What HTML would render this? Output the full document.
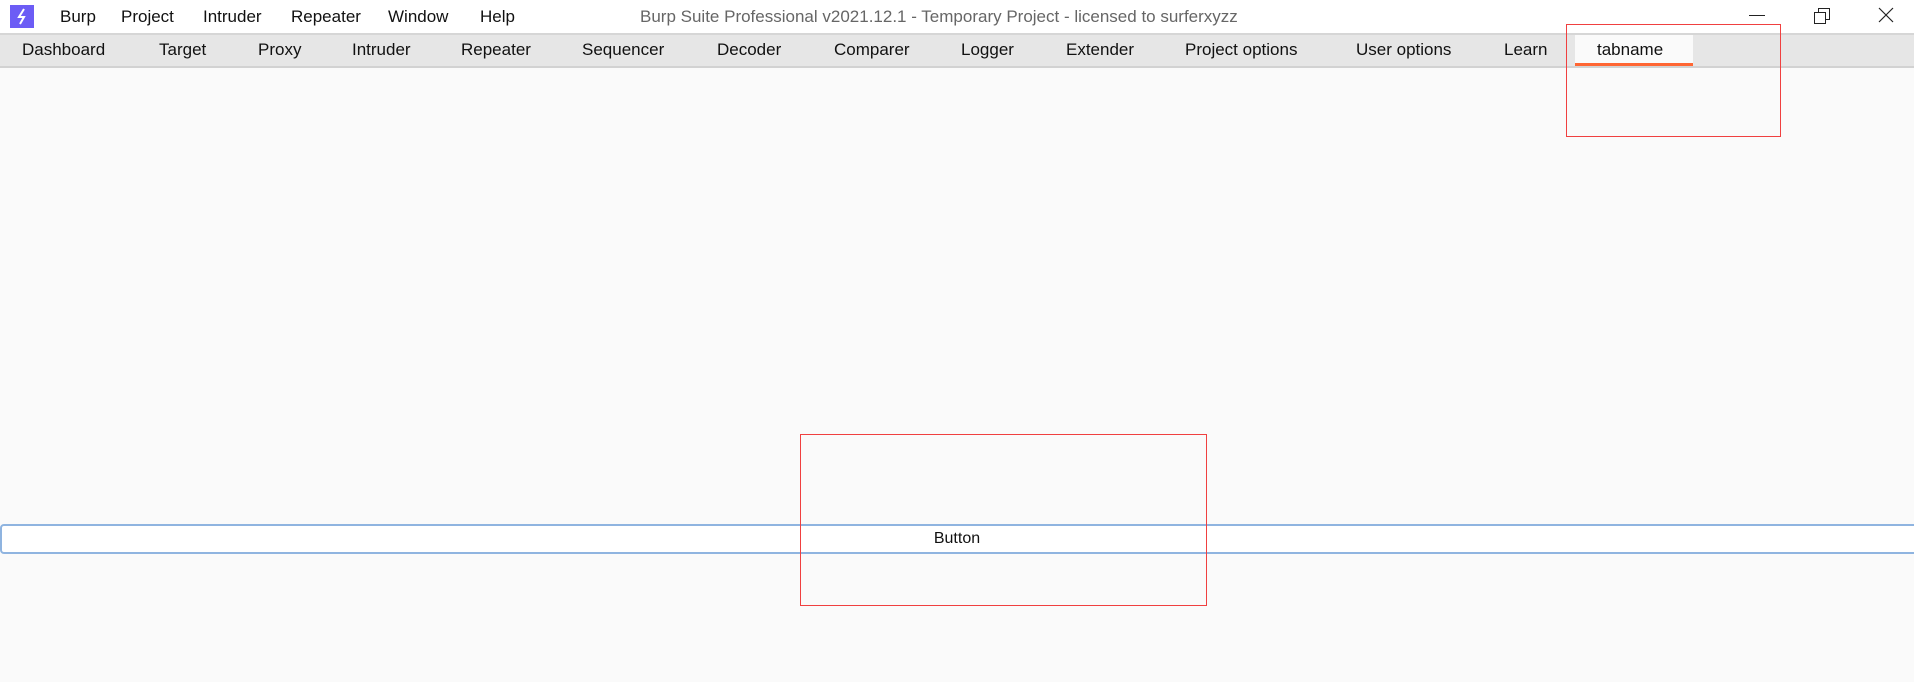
<!DOCTYPE html>
<html><head><meta charset="utf-8"><style>
*{margin:0;padding:0;box-sizing:border-box}
body{width:1914px;height:682px;background:#fafafa;font-family:"Liberation Sans",sans-serif;font-size:17px;color:#111;position:relative;overflow:hidden}
.a{position:absolute;white-space:nowrap}
#title{position:absolute;left:0;top:0;width:1914px;height:33px;background:#fff}
#tabs{position:absolute;left:0;top:33px;width:1914px;height:35px;background:#e6e6e6;border-top:2px solid #d6d6d6;border-bottom:2px solid #d2d2d2}
.m{top:7px}
.t{top:40px}
</style></head><body>
<div id="title"></div>
<div id="tabs"></div>
<div class="a" style="left:10px;top:5px;width:24px;height:23px;background:#6c5cf5"></div>
<svg class="a" style="left:10px;top:5px" width="24" height="23"><path d="M14 4 L9 12 L14 12 L10 19" stroke="#fff" stroke-width="2" fill="none"/></svg>
<div class="a m" style="left:60px">Burp</div>
<div class="a m" style="left:121px">Project</div>
<div class="a m" style="left:203px">Intruder</div>
<div class="a m" style="left:291px">Repeater</div>
<div class="a m" style="left:388px">Window</div>
<div class="a m" style="left:480px">Help</div>
<div class="a m" style="left:640px;color:#666">Burp Suite Professional v2021.12.1 - Temporary Project - licensed to surferxyzz</div>
<div class="a" style="left:1749px;top:15px;width:16px;height:1px;background:#222"></div>
<svg class="a" style="left:1813px;top:7px" width="18" height="18"><rect x="1.5" y="5.5" width="11" height="11" fill="none" stroke="#222"/><path d="M5.5 5.5V1.5H16.5V12.5H12.5" fill="none" stroke="#222"/></svg>
<svg class="a" style="left:1878px;top:7px" width="16" height="16"><path d="M1 1L15 15M15 1L1 15" stroke="#222" stroke-width="1.2"/></svg>
<div class="a" style="left:1575px;top:35px;width:118px;height:31px;background:#fafafa;border-bottom:3px solid #ff6633"></div>
<div class="a t" style="left:22px">Dashboard</div>
<div class="a t" style="left:159px">Target</div>
<div class="a t" style="left:258px">Proxy</div>
<div class="a t" style="left:352px">Intruder</div>
<div class="a t" style="left:461px">Repeater</div>
<div class="a t" style="left:582px">Sequencer</div>
<div class="a t" style="left:717px">Decoder</div>
<div class="a t" style="left:834px">Comparer</div>
<div class="a t" style="left:961px">Logger</div>
<div class="a t" style="left:1066px">Extender</div>
<div class="a t" style="left:1185px">Project options</div>
<div class="a t" style="left:1356px;width:102px;overflow:hidden">User options</div>
<div class="a t" style="left:1504px">Learn</div>
<div class="a t" style="left:1597px">tabname</div>
<div class="a" style="left:1566px;top:24px;width:215px;height:113px;border:1px solid #f04040"></div>
<div class="a" style="left:0;top:524px;width:1920px;height:30px;background:#fff;border:2px solid #8fb4e0;border-radius:4px"></div>
<div class="a" style="left:0;top:530px;width:1914px;text-align:center;font-size:16px">Button</div>
<div class="a" style="left:800px;top:434px;width:407px;height:172px;border:1px solid #f04040"></div>
</body></html>
